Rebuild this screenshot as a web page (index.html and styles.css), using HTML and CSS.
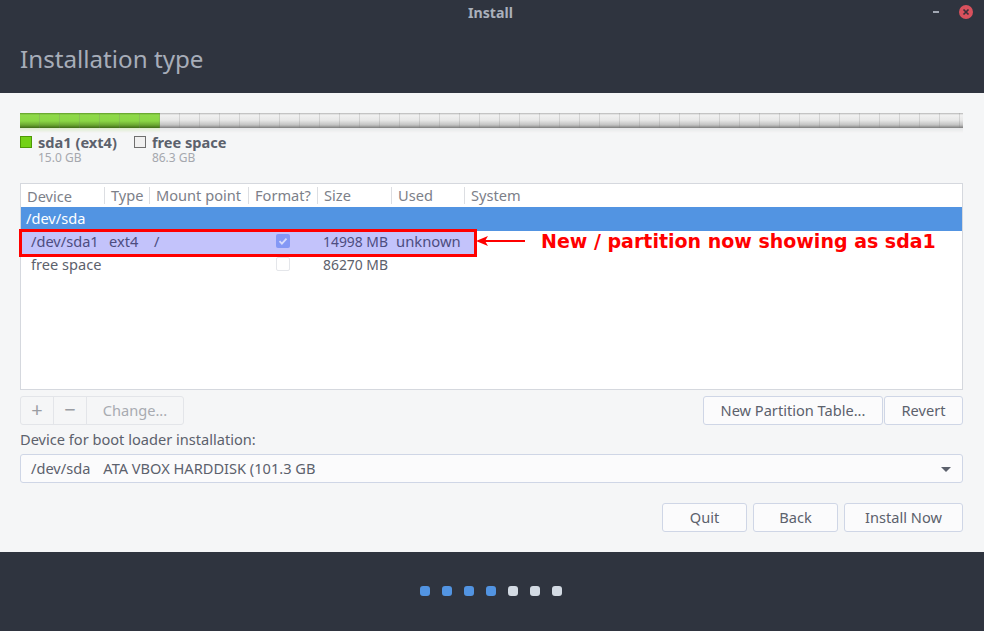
FILE: index.html
```html
<!DOCTYPE html>
<html>
    <head>
        <meta charset="utf-8">
        <title>Install</title>
        <link rel="stylesheet" href="styles.css">
    </head>
    <body>
        <div class="window">
            <div class="header">
                <div class="titlebar">
                    <span class="wintitle">Install</span>
                    <span class="minimize"></span>
                    <span class="close">
                        <svg width="14" height="14" viewBox="0 0 14 14"><circle cx="7" cy="7" r="7" fill="#d9515d"/><path d="M4.5 4.5l5 5M9.5 4.5l-5 5" stroke="#3a2f3a" stroke-width="1.7"/></svg>
                    </span>
                </div>
                <h1>Installation type</h1>
            </div>

            <div class="main">
                <div class="bar">
                    <div class="bar-used"></div>
                    <div class="bar-free"></div>
                </div>
                <div class="bar-shine"></div>
                <div class="legend">
                    <div class="legend-item">
                        <span class="swatch swatch-green"></span>
                        <div>
                            <div class="legend-name">sda1 (ext4)</div>
                            <div class="legend-size">15.0 GB</div>
                        </div>
                    </div>
                    <div class="legend-item">
                        <span class="swatch swatch-free"></span>
                        <div>
                            <div class="legend-name">free space</div>
                            <div class="legend-size">86.3 GB</div>
                        </div>
                    </div>
                </div>

                <div class="table">
                    <div class="row head">
                        <span class="col c1">Device</span>
                        <span class="col c2 sep">Type</span>
                        <span class="col c3 sep">Mount point</span>
                        <span class="col c4 sep">Format?</span>
                        <span class="col c5 sep">Size</span>
                        <span class="col c6 sep">Used</span>
                        <span class="col c7 sep">System</span>
                    </div>
                    <div class="row disk">/dev/sda</div>
                    <div class="row part selected">
                        <span class="p1">/dev/sda1</span>
                        <span class="p2">ext4</span>
                        <span class="p3">/</span>
                        <span class="p4"><span class="check on">
                            <svg width="10" height="10" viewBox="0 0 10 10"><path d="M1.5 5.2l2.4 2.4 4.6-5" fill="none" stroke="#d8dcfb" stroke-width="1.8"/></svg>
                        </span></span>
                        <span class="p5">14998 MB</span>
                        <span class="p6">unknown</span>
                    </div>
                    <div class="row part free">
                        <span class="p1">free space</span>
                        <span class="p2"></span>
                        <span class="p3"></span>
                        <span class="p4"><span class="check"></span></span>
                        <span class="p5">86270 MB</span>
                    </div>

                    <div class="callout-box"></div>
                    <svg class="callout-arrow" width="50" height="14" viewBox="0 0 50 14"><path d="M3 7h47" stroke="#f00" stroke-width="2"/><path d="M1 7l12-5-3 5 3 5z" fill="#f00"/></svg>
                    <div class="callout-text">New / partition now showing as sda1</div>
                </div>

                <div class="tools">
                    <div class="toolgroup">
                        <span class="tool small">+</span>
                        <span class="tool small">−</span>
                        <span class="tool change">Change...</span>
                    </div>
                    <div class="toolright">
                        <span class="btn newtable">New Partition Table...</span>
                        <span class="btn revert">Revert</span>
                    </div>
                </div>

                <div class="bootlabel">Device for boot loader installation:</div>
                <div class="combo">
                    <span class="combo-dev">/dev/sda</span>
                    <span>ATA VBOX HARDDISK (101.3 GB</span>
                    <span class="caret"></span>
                </div>

                <div class="actions">
                    <span class="btn quit">Quit</span>
                    <span class="btn back">Back</span>
                    <span class="btn install">Install Now</span>
                </div>
            </div>

            <div class="footer">
                <span class="dot done"></span>
                <span class="dot done"></span>
                <span class="dot done"></span>
                <span class="dot done"></span>
                <span class="dot"></span>
                <span class="dot"></span>
                <span class="dot"></span>
            </div>
        </div>
    </body>
</html>
```

FILE: styles.css
```css
html, body {
    margin: 0;
    padding: 0;
}

body {
    width: 984px;
    height: 631px;
    overflow: hidden;
    font-family: "Noto Sans", "Open Sans", sans-serif;
    font-size: 14.6px;
    color: #5c616c;
}

.window {
    display: flex;
    flex-direction: column;
    height: 631px;
    background: #f5f6f7;
}

.header {
    height: 93px;
    background: #2f343f;
}

.titlebar {
    height: 26px;
    padding-bottom: 2px;
    box-sizing: border-box;
    display: flex;
    align-items: center;
    justify-content: center;
    position: relative;
}

.wintitle {
    font-size: 14.2px;
    font-weight: 700;
    color: #aab0bc;
    padding-right: 3px;
}

.minimize {
    position: absolute;
    left: 933px;
    top: 11px;
    width: 6px;
    height: 2px;
    background: #a2a8b4;
}

.close {
    position: absolute;
    left: 959px;
    top: 5px;
    width: 14px;
    height: 14px;
}

.close svg {
    display: block;
}

h1 {
    margin: 15px 0 0 20px;
    font-size: 24.2px;
    line-height: 36px;
    font-weight: 400;
    color: #a7adb9;
}

.main {
    height: 459px;
    padding: 20px 21px 0 20px;
    box-sizing: border-box;
}

.bar {
    display: flex;
    height: 15px;
    position: relative;
}

.bar::after {
    content: "";
    position: absolute;
    inset: 0;
    background: repeating-linear-gradient(90deg, transparent 0, transparent 19px, rgba(120, 120, 120, .22) 19px, rgba(120, 120, 120, .22) 20px);
}

.bar-used {
    width: 140px;
    background: linear-gradient(#5f9a2a 0, #8fd94a 2px, #8ad645 8px, #6ba832 12px, #3f6b17 15px);
}

.bar-free {
    flex: 1;
    background: linear-gradient(#b5b5b5 0, #f1f1f1 2px, #e8e8e8 7px, #c2c2c2 12px, #7c7c7c 15px);
}

.bar-shine {
    height: 5px;
    background: linear-gradient(90deg, #dcebcb 0, #dcebcb 140px, #e6e7e8 140px, #e6e7e8 100%);
    -webkit-mask-image: linear-gradient(#000, transparent);
    mask-image: linear-gradient(#000, transparent);
}

.legend {
    display: flex;
    margin-top: 1px;
    height: 49px;
}

.legend-item {
    display: flex;
    margin-right: 17px;
}

.swatch {
    width: 12px;
    height: 12px;
    margin: 2px 6px 0 0;
    box-sizing: border-box;
    border: 1px solid #6f6f6f;
}

.swatch-green {
    background: #73d216;
    border-color: #4e9a06;
}

.swatch-free {
    background: #f0f0f0;
}

.legend-name {
    font-size: 14.6px;
    line-height: 16px;
    font-weight: 700;
    color: #5c616c;
}

.legend-size {
    margin-top: 2px;
    font-size: 12px;
    line-height: 12px;
    color: #a5a8ae;
}

.table {
    height: 207px;
    box-sizing: border-box;
    border: 1px solid #d5d8de;
    background: #fff;
    position: relative;
}

.row {
    display: flex;
    align-items: center;
    height: 23px;
    box-sizing: border-box;
}

.col {
    box-sizing: border-box;
    font-size: 14.6px;
    color: #7c8089;
    padding-left: 6px;
}

.sep {
    border-left: 1px solid #dcdee2;
    line-height: 17px;
}

.c1 { width: 83px; }
.c2 { width: 45px; }
.c3 { width: 99px; }
.c4 { width: 69px; }
.c5 { width: 74px; }
.c6 { width: 73px; }
.c7 { flex: 1; }

.disk {
    height: 24px;
    padding: 0 0 2px 5px;
    background: #5294e2;
    color: #fff;
}

.part {
    padding-bottom: 3px;
}

.selected {
    width: 455px;
    background: #c3c3fb;
    color: #4d4d80;
}

.free {
    color: #5c616c;
}

.p1 { width: 88px; padding-left: 10px; box-sizing: border-box; }
.p2 { width: 45px; }
.p3 { width: 91px; }
.p4 { width: 78px; padding-left: 31px; box-sizing: border-box; }
.p5 { width: 73px; font-size: 13.9px; }
.p6 { font-size: 14.8px; }

.check {
    display: flex;
    align-items: center;
    justify-content: center;
    width: 14px;
    height: 14px;
    box-sizing: border-box;
    border: 1px solid #e4e6ea;
    border-radius: 2px;
    background: #fff;
}

.check.on {
    border: 0;
    background: #8498f5;
}

.check svg {
    display: block;
}

.callout-box {
    position: absolute;
    left: -2px;
    top: 45px;
    width: 458px;
    height: 28px;
    box-sizing: border-box;
    border: 3px solid #f00;
}

.callout-arrow {
    position: absolute;
    left: 454px;
    top: 50px;
}

.callout-text {
    position: absolute;
    left: 520px;
    top: 46px;
    font-family: "DejaVu Sans", sans-serif;
    font-size: 19px;
    font-weight: 700;
    line-height: 22px;
    white-space: nowrap;
    color: #f00;
}

.tools {
    display: flex;
    justify-content: space-between;
    margin-top: 6px;
}

.toolgroup,
.toolright {
    display: flex;
}

.tool {
    display: flex;
    align-items: center;
    justify-content: center;
    box-sizing: border-box;
    height: 29px;
    padding-bottom: 2px;
    border: 1px solid #e3e5e9;
    background: #f5f6f7;
    color: #a8abb1;
}

.tool.small {
    width: 34px;
    margin-right: -1px;
    font-size: 20px;
    color: #9a9da3;
}

.tool.small:first-child {
    border-radius: 3px 0 0 3px;
}

.tool.change {
    width: 98px;
    border-radius: 0 3px 3px 0;
}

.btn {
    display: flex;
    align-items: center;
    justify-content: center;
    box-sizing: border-box;
    height: 29px;
    padding-bottom: 2px;
    border: 1px solid #cfd6e6;
    border-radius: 3px;
    background: #fbfbfc;
    color: #5c616c;
}

.newtable { width: 180px; }
.revert { width: 79px; margin-left: 1px; }

.bootlabel {
    margin-top: 5px;
    padding-bottom: 2px;
    line-height: 18px;
}

.combo {
    display: flex;
    align-items: center;
    height: 29px;
    margin-top: 4px;
    padding: 0 0 2px 10px;
    box-sizing: border-box;
    border: 1px solid #cfd6e6;
    border-radius: 3px;
    background: #fbfbfc;
    position: relative;
}

.combo-dev {
    margin-right: 13px;
}

.caret {
    position: absolute;
    right: 11px;
    top: 12px;
    width: 0;
    height: 0;
    border-left: 5px solid transparent;
    border-right: 5px solid transparent;
    border-top: 5px solid #5c616c;
}

.actions {
    display: flex;
    justify-content: flex-end;
    gap: 6px;
    margin-top: 20px;
}

.quit { width: 85px; }
.back { width: 85px; }
.install { width: 119px; }

.footer {
    flex: 1;
    display: flex;
    justify-content: center;
    gap: 12px;
    padding: 34px 2px 0 0;
    box-sizing: border-box;
    background: #2f343f;
}

.dot {
    width: 10px;
    height: 10px;
    border-radius: 3px;
    background: #d3dae3;
}

.dot.done {
    background: #5294e2;
}
```
